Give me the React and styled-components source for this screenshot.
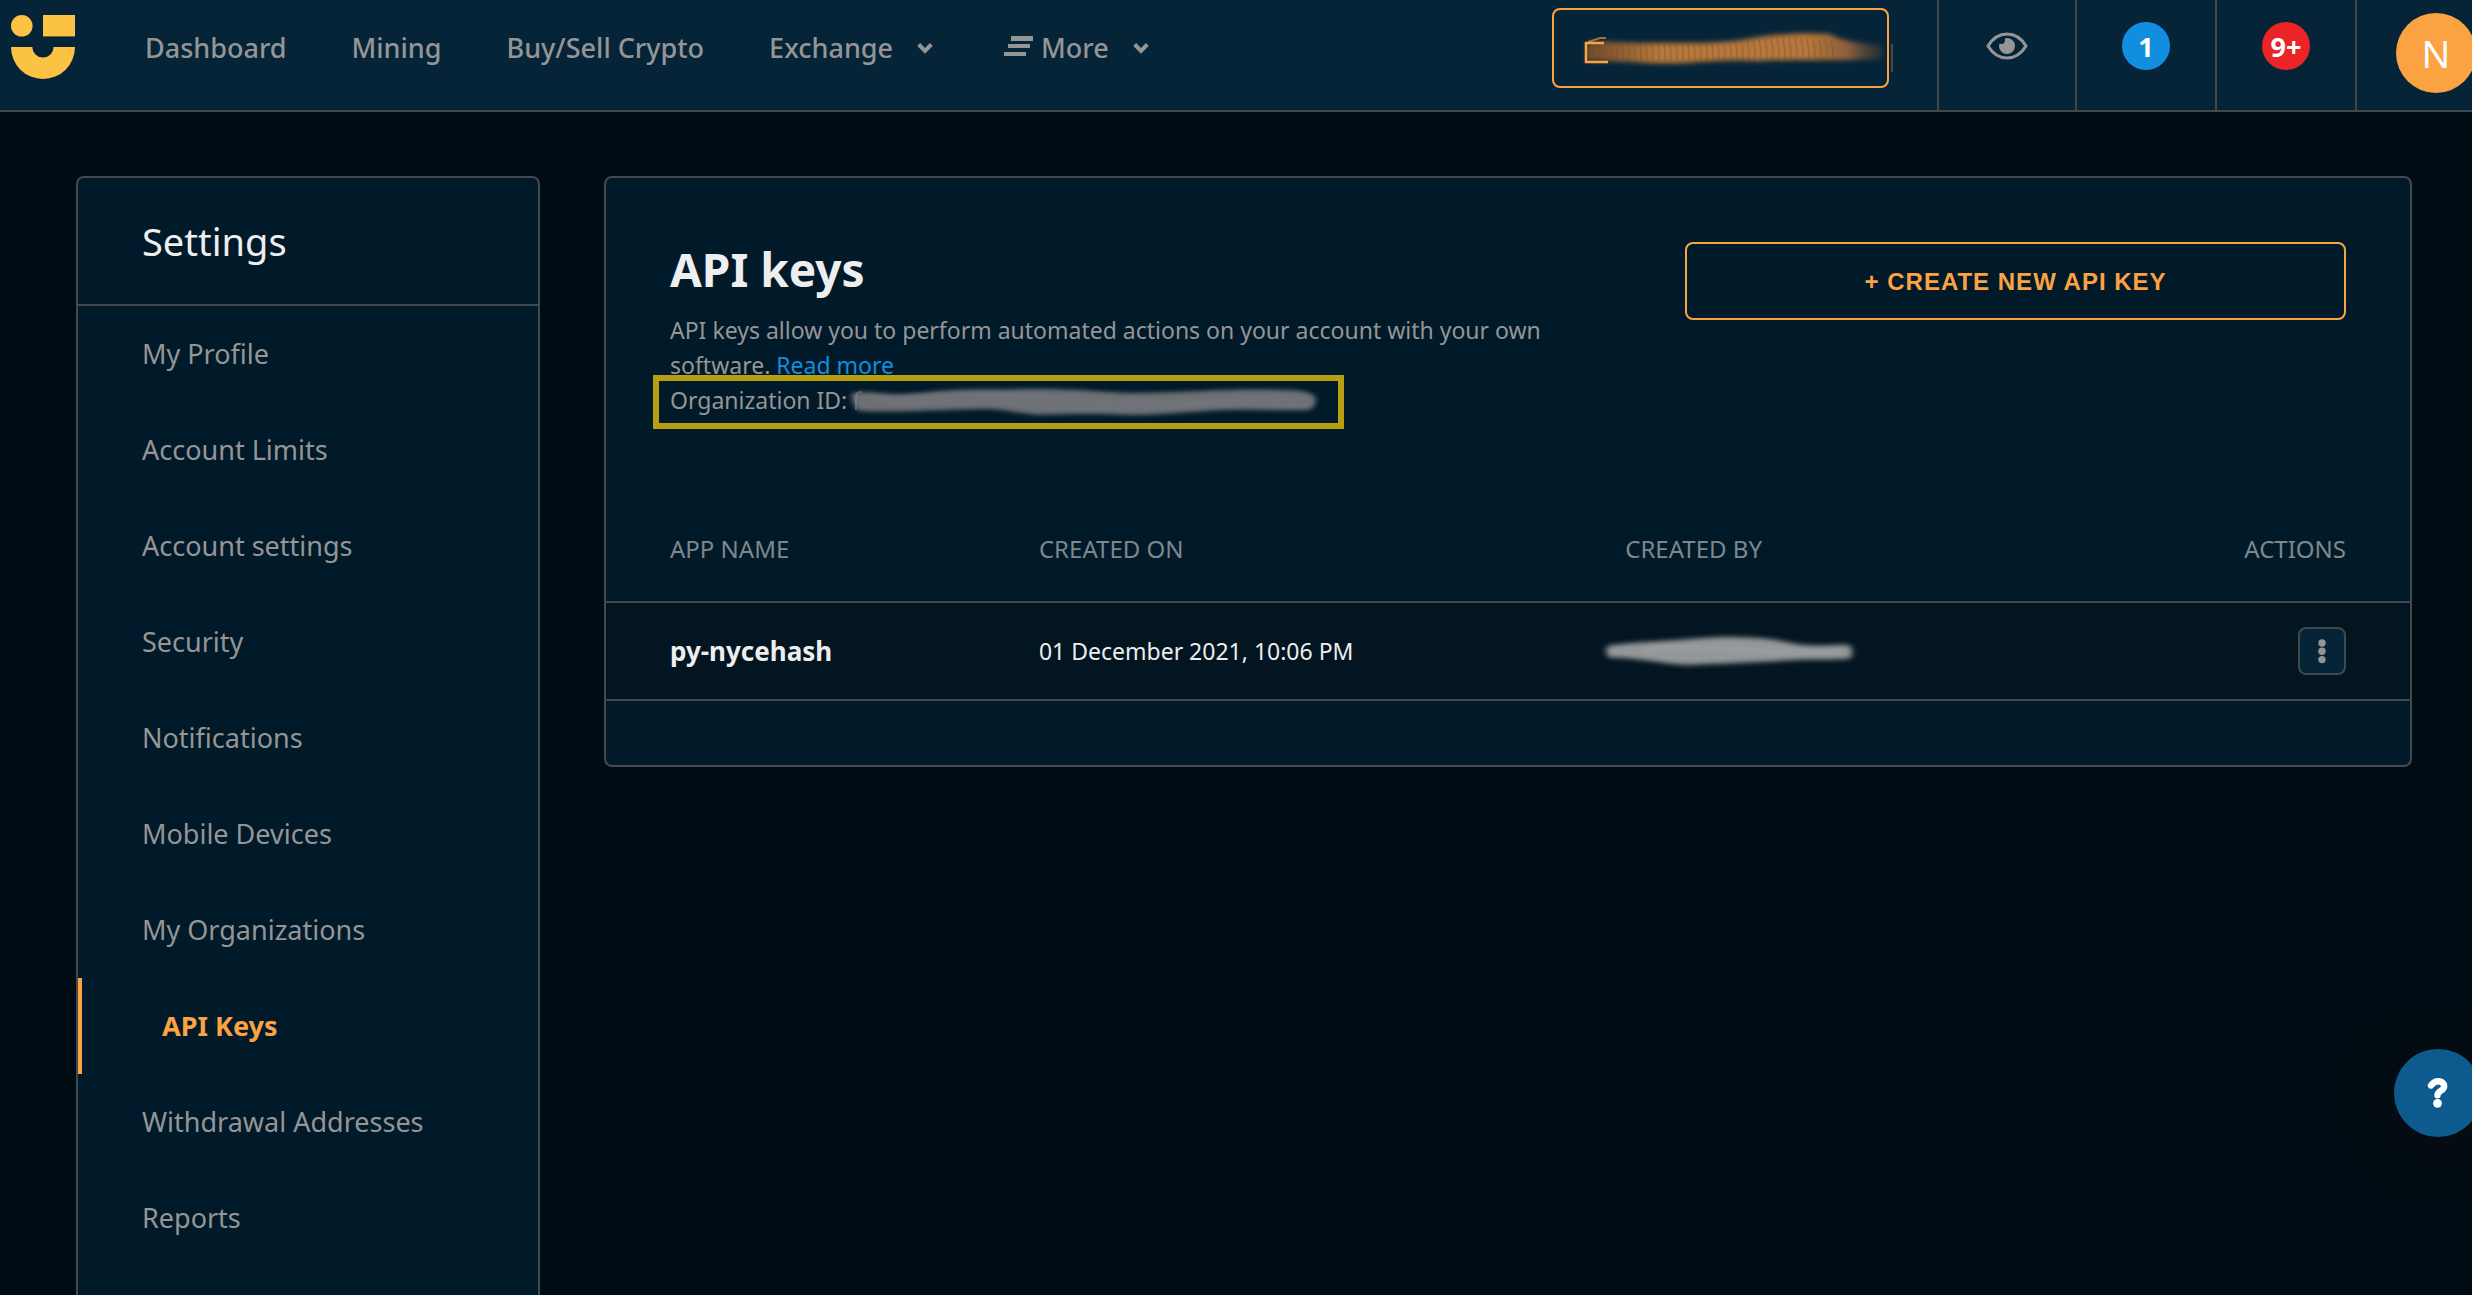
import React from "react";
import styled, { createGlobalStyle, css } from "styled-components";

const color = {
  page: "#000c13",
  bar: "#052438",
  panel: "#011a29",
  row: "#021520",
  line: "#42494d",
  muted: "#959595",
  heading: "#eeeeee",
  orange: "#fba342",
  blue: "#128ee0",
  red: "#ea2427",
  yellow: "#fcc243",
};

const GlobalStyle = createGlobalStyle`
  *, *::before, *::after { box-sizing: border-box; }
  html, body { height: 100%; }
  body {
    margin: 0;
    overflow: hidden;
    background: ${color.page};
    color: ${color.muted};
    font-family: "Noto Sans", "Open Sans", sans-serif;
    font-size: 23px;
    line-height: 35px;
  }
  #root { height: 100%; }
  h1, h2, p, ul { margin: 0; padding: 0; }
  ul { list-style: none; }
  a { color: inherit; text-decoration: none; }
  button { font: inherit; color: inherit; cursor: pointer; }
  svg { display: block; }
`;

const Page = styled.div`
  display: flex;
  flex-direction: column;
  height: 100%;
  overflow: hidden;
`;

const Header = styled.header`
  display: flex;
  flex: none;
  align-items: stretch;
  height: 112px;
  background: ${color.bar};
  border-bottom: 2px solid ${color.line};
`;

const LogoLink = styled.a`
  padding: 15px 8px 0 11px;
`;

const Nav = styled.nav`
  display: flex;
  flex: 1;
  align-items: center;
  padding: 0 0 14px 62px;
  gap: 65px;
`;

const navItem = css`
  display: flex;
  align-items: center;
  padding: 0;
  border: 0;
  background: none;
  color: ${color.muted};
  font-size: 27px;
  font-weight: 500;
  line-height: 36px;
  white-space: nowrap;
`;

const NavLink = styled.a`
  ${navItem}
`;

const NavMenu = styled.button`
  && {
    ${navItem}
  }
  gap: 8px;
`;

const NavChevron = styled.svg`
  margin: 0 6px 0 16px;
`;

const AccountButton = styled.button`
  width: 337px;
  height: 80px;
  margin: 8px 48px 0 0;
  padding: 0;
  border: 2px solid ${color.orange};
  border-radius: 8px;
  background: none;
`;

const HeaderCell = styled.button`
  display: flex;
  align-items: center;
  justify-content: center;
  width: ${(p) => (p.$narrow ? "138px" : "140px")};
  padding: 0 0 18px;
  border: 0;
  border-left: 2px solid ${color.line};
  background: none;
`;

const Badge = styled.span`
  display: flex;
  align-items: center;
  justify-content: center;
  width: 48px;
  height: 48px;
  border-radius: 50%;
  background: ${(p) => p.$fill};
  color: #fff;
  font-size: 27px;
  font-weight: 700;
`;

const ProfileCell = styled.button`
  display: flex;
  justify-content: flex-start;
  width: 117px;
  padding: 13px 0 0 39px;
  border: 0;
  border-left: 2px solid ${color.line};
  background: none;
`;

const Avatar = styled.span`
  display: flex;
  flex: none;
  align-items: center;
  justify-content: center;
  width: 80px;
  height: 80px;
  border-radius: 50%;
  background: ${color.orange};
  color: #fff;
  font-size: 38px;
`;

const Content = styled.div`
  display: grid;
  flex: 1;
  grid-template-columns: 464px minmax(0, 1fr);
  gap: 64px;
  padding: 64px 60px 0 76px;
`;

const Sidebar = styled.aside`
  border: 2px solid ${color.line};
  border-bottom: 0;
  border-radius: 8px 8px 0 0;
  background: ${color.panel};
`;

const SidebarTitle = styled.h2`
  padding: 35px 64px;
  border-bottom: 2px solid ${color.line};
  color: ${color.heading};
  font-size: 38px;
  font-weight: 400;
  line-height: 56px;
`;

const SidebarLink = styled.a`
  display: block;
  padding: 30px 0 30px 64px;
  color: ${color.muted};
  font-size: 27px;
  line-height: 36px;

  ${(p) =>
    p.$active &&
    css`
      padding-left: 80px;
      border-left: 4px solid ${color.orange};
      color: ${color.orange};
      font-weight: 700;
    `}
`;

const Panel = styled.main`
  align-self: start;
  border: 2px solid ${color.line};
  border-radius: 8px;
  background: ${color.panel};
  padding-bottom: 64px;
`;

const PanelHead = styled.section`
  display: grid;
  grid-template-columns: 7fr 5fr;
  gap: 90px;
  align-items: start;
  padding: 64px 64px 77px;
`;

const Title = styled.h1`
  margin-bottom: 17px;
  color: ${color.heading};
  font-size: 46px;
  font-weight: 700;
  line-height: 54px;
`;

const ReadMore = styled.a`
  color: ${color.blue};
`;

const Organization = styled.p`
  display: flex;
  position: relative;
  align-items: center;
  width: fit-content;

  &::after {
    content: "";
    position: absolute;
    inset: -8px -23px -11px -17px;
    border: 6px solid #b89f12;
  }
`;

const CreateButton = styled.button`
  && {
    height: 78px;
    border: 2px solid ${color.orange};
    border-radius: 8px;
    background: none;
    color: ${color.orange};
    font-family: "Liberation Sans", Arial, sans-serif;
    font-size: 24px;
    font-weight: 700;
    letter-spacing: 1px;
  }
`;

const Table = styled.table`
  width: 100%;
  border-spacing: 0;
  table-layout: fixed;
`;

const Col = styled.col`
  width: ${(p) => p.$width};
`;

const HeadCell = styled.th`
  padding: 36px 0 35px;
  border-bottom: 2px solid ${color.line};
  color: #7e878b;
  font-size: 24px;
  font-weight: 400;
  text-align: left;

  &:first-child { padding-left: 64px; }
  &:last-child { padding-right: 64px; text-align: right; }
`;

const Cell = styled.td`
  height: 98px;
  padding: 0;
  border-bottom: 2px solid ${color.line};
  background: ${color.row};
  color: ${color.heading};

  &:first-child { padding-left: 64px; font-size: 26px; font-weight: 700; }
  &:last-child { padding-right: 64px; }
`;

const RowMenu = styled.button`
  display: flex;
  align-items: center;
  justify-content: center;
  width: 48px;
  height: 48px;
  margin-left: auto;
  padding: 0;
  border: 2px solid ${color.line};
  border-radius: 8px;
  background: ${color.bar};
`;

const Smudge = styled.svg`
  flex: none;
  overflow: visible;
  margin-left: ${(p) => p.$shift || "0"};
`;

const HelpButton = styled.button`
  display: flex;
  position: fixed;
  right: -10px;
  bottom: 158px;
  align-items: center;
  justify-content: center;
  width: 88px;
  height: 88px;
  padding: 0;
  border: 0;
  border-radius: 50%;
  background: #0d5b8e;
  box-shadow: 0 8px 40px 8px rgba(16, 14, 18, 0.5);
`;

const Logo = () => (
  <svg width="64" height="64" viewBox="0 0 64 64" fill={color.yellow} aria-hidden="true">
    <circle cx="10.8" cy="10.8" r="10.8" />
    <rect x="32" width="32" height="21.4" />
    <path d="M0 32H21.4a10.6 10.6 0 0 0 21.2 0H64a32 32 0 0 1-64 0Z" />
  </svg>
);

const Chevron = () => (
  <NavChevron width="16" height="12" viewBox="0 0 16 12" aria-hidden="true">
    <path d="M1.700 2.500l6.300 6.300 6.300-6.300" fill="none" stroke={color.muted} strokeWidth="4" />
  </NavChevron>
);

const MoreIcon = () => (
  <svg width="29" height="26" viewBox="0 0 29 26" fill={color.muted} aria-hidden="true">
    <path d="M7 1h22v5H7zM4 9h22v4H4zM0 17h22v4H0z" />
  </svg>
);

const EyeIcon = () => (
  <svg width="42" height="28" viewBox="0 0 42 28" aria-hidden="true">
    <path
      d="M2 14C6.500 6.500 13 2 21 2s14.500 4.500 19 12c-4.500 7.500-11 12-19 12S6.500 21.500 2 14Z"
      fill="none"
      stroke={color.muted}
      strokeWidth="3.200"
      strokeLinejoin="round"
    />
    <path d="M21 6a8 8 0 1 1-8 8c0-1 .2-1.600.5-2.400 2.800 1.400 6.500-.6 5.300-4.900C19.500 6.200 20.200 6 21 6Z" fill={color.muted} />
  </svg>
);

const DotsIcon = () => (
  <svg width="8" height="26" viewBox="0 0 8 26" fill={color.muted} aria-hidden="true">
    <circle cx="4" cy="5" r="3.700" />
    <circle cx="4" cy="13.300" r="3.700" />
    <circle cx="4" cy="21.600" r="3.700" />
  </svg>
);

const QuestionIcon = () => (
  <svg width="22" height="30" viewBox="0 0 22 30" aria-hidden="true">
    <path
      d="M4 7.500C6 4.500 8.500 3.200 11.300 3.200c3.700 0 5.900 2.100 5.900 5 0 4.600-6.700 4.800-6.700 9"
      fill="none"
      stroke="#fff"
      strokeWidth="6.400"
      strokeLinecap="round"
      strokeLinejoin="round"
    />
    <circle cx="10.500" cy="25.300" r="4.400" fill="#fff" />
  </svg>
);

const AccountSmudge = () => (
  <Smudge width="333" height="76" viewBox="0 0 333 76" aria-hidden="true">
    <defs>
      <linearGradient id="amber" x1="0" x2="1">
        <stop offset="0" stopColor="#6f4a2c" />
        <stop offset="0.25" stopColor="#b5773b" />
        <stop offset="0.75" stopColor="#b5773b" />
        <stop offset="0.88" stopColor="#8c5f3a" />
        <stop offset="1" stopColor="#5f4a3c" stopOpacity="0.3" />
      </linearGradient>
      <pattern id="ripple" width="6" height="30" patternUnits="userSpaceOnUse">
        <path d="M1 0q4 15 0 30" fill="none" stroke="#6b4629" strokeWidth="1.500" />
      </pattern>
      <filter id="amberBlur" x="-10%" y="-40%" width="120%" height="180%">
        <feGaussianBlur stdDeviation="2.400" />
      </filter>
    </defs>
    <path
      d="M32 34C44 29 60 33 90 33c50 0 80 1 110-5 30-5 55-5 75-4 12 6 24 9 54 11v14c-40 2-90 0-125 2-40-3-70 4-110 2-30-2-50-2-62-2Z"
      fill="url(#amber)"
      filter="url(#amberBlur)"
    />
    <path d="M34 34C60 34 150 36 200 29c30-4 60-3 80 2v20c-60 1-160-1-246 0Z" fill="url(#ripple)" opacity="0.3" />
    <path d="M54 52H32V33H50" fill="none" stroke={color.orange} strokeWidth="2.500" />
    <path d="M34 32L46 28H52" fill="none" stroke={color.orange} strokeWidth="2" opacity="0.6" />
    <path d="M338 34v28" stroke={color.orange} strokeWidth="2" opacity="0.3" />
  </Smudge>
);

const OrganizationSmudge = () => (
  <Smudge width="474" height="28" viewBox="0 0 474 34" preserveAspectRatio="none" aria-hidden="true">
    <defs>
      <filter id="greyBlur" x="-5%" y="-40%" width="110%" height="180%">
        <feGaussianBlur stdDeviation="2.800" />
      </filter>
    </defs>
    <path
      d="M4 8C22 4 34 9 52 9c28-2 48-6 76-6 40 0 60-1 88 0 34 1 50 5 84 4 50-1 92-6 144-3 14 0 25 5 25 11-1 6-1 10-8 13-32 1-66-2-100 1-30 2-50 5-80 5-40-2-60-1-90 0-26-3-40-9-62-7-42 1-82 4-116 2-6-1-8-15-9-21Z"
      fill="#6c7074"
      filter="url(#greyBlur)"
    />
    <g fill="none" stroke="#85878a" strokeWidth="2" opacity="0.5" filter="url(#greyBlur)">
      <path d="M20 12c50 4 80-6 130-3s80 10 140 10 120-6 170-6" />
      <path d="M40 20c60 0 90-6 130 0s80 8 140 4 90-4 150-2" />
    </g>
    <path d="M9 28V12q0-6 6-6" fill="none" stroke="#8b8b8b" strokeWidth="2" opacity="0.5" />
  </Smudge>
);

const CreatorSmudge = () => (
  <Smudge $shift="-22px" width="254" height="32" viewBox="0 0 254 34" preserveAspectRatio="none" aria-hidden="true">
    <defs>
      <filter id="lightBlur" x="-8%" y="-40%" width="116%" height="180%">
        <feGaussianBlur stdDeviation="3" />
      </filter>
    </defs>
    <path
      d="M4 12C20 8 60 7 90 4c30-3 50-2 74 0 16 2 26 6 42 7 16 1 30-2 41 0 3 5 3 10 0 14-12 2-50 0-74 3-30 2-60 2-88 4C60 31 36 24 6 24c-3-3-3-8-2-12Z"
      fill="#94979a"
      filter="url(#lightBlur)"
    />
    <path d="M40 17c60-10 100 4 195 1" fill="none" stroke="#abadaf" strokeWidth="3" opacity="0.5" filter="url(#lightBlur)" />
  </Smudge>
);

const settings = [
  "My Profile",
  "Account Limits",
  "Account settings",
  "Security",
  "Notifications",
  "Mobile Devices",
  "My Organizations",
  "API Keys",
  "Withdrawal Addresses",
  "Reports",
];

export default function App() {
  return (
    <Page>
      <GlobalStyle />
      <Header>
        <LogoLink href="#home" aria-label="Home">
          <Logo />
        </LogoLink>
        <Nav>
          <NavLink href="#dashboard">Dashboard</NavLink>
          <NavLink href="#mining">Mining</NavLink>
          <NavLink href="#crypto">Buy/Sell Crypto</NavLink>
          <NavMenu type="button">
            Exchange
            <Chevron />
          </NavMenu>
          <NavMenu type="button">
            <MoreIcon />
            More
            <Chevron />
          </NavMenu>
        </Nav>
        <AccountButton type="button" aria-label="Account">
          <AccountSmudge />
        </AccountButton>
        <HeaderCell type="button" $narrow aria-label="Visibility">
          <EyeIcon />
        </HeaderCell>
        <HeaderCell type="button">
          <Badge $fill={color.blue}>1</Badge>
        </HeaderCell>
        <HeaderCell type="button">
          <Badge $fill={color.red}>9+</Badge>
        </HeaderCell>
        <ProfileCell type="button">
          <Avatar>N</Avatar>
        </ProfileCell>
      </Header>

      <Content>
        <Sidebar>
          <SidebarTitle>Settings</SidebarTitle>
          <ul>
            {settings.map((name) => (
              <li key={name}>
                <SidebarLink href="#settings" $active={name === "API Keys"}>
                  {name}
                </SidebarLink>
              </li>
            ))}
          </ul>
        </Sidebar>

        <Panel>
          <PanelHead>
            <div>
              <Title>API keys</Title>
              <p>
                API keys allow you to perform automated actions on your account with your own software.{" "}
                <ReadMore href="#read-more">Read more</ReadMore>
              </p>
              <Organization>
                Organization ID:
                <OrganizationSmudge />
              </Organization>
            </div>
            <CreateButton type="button">+ CREATE NEW API KEY</CreateButton>
          </PanelHead>
          <Table>
            <colgroup>
              <Col $width="24%" />
              <Col $width="32.5%" />
              <Col $width="26%" />
              <Col />
            </colgroup>
            <thead>
              <tr>
                <HeadCell>APP NAME</HeadCell>
                <HeadCell>CREATED ON</HeadCell>
                <HeadCell>CREATED BY</HeadCell>
                <HeadCell>ACTIONS</HeadCell>
              </tr>
            </thead>
            <tbody>
              <tr>
                <Cell>py-nycehash</Cell>
                <Cell>01 December 2021, 10:06 PM</Cell>
                <Cell>
                  <CreatorSmudge />
                </Cell>
                <Cell>
                  <RowMenu type="button" aria-label="Actions for py-nycehash">
                    <DotsIcon />
                  </RowMenu>
                </Cell>
              </tr>
            </tbody>
          </Table>
        </Panel>
      </Content>

      <HelpButton type="button" aria-label="Help">
        <QuestionIcon />
      </HelpButton>
    </Page>
  );
}
